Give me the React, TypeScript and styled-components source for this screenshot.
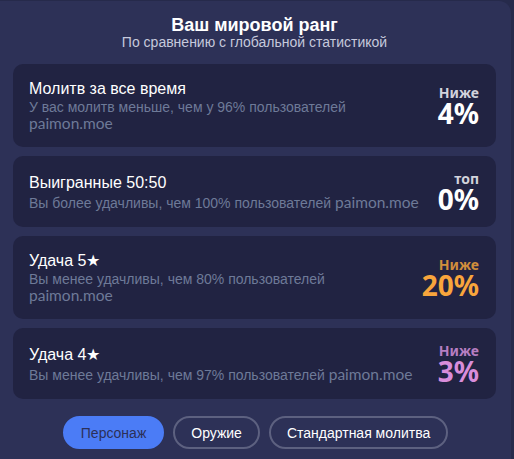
import React from 'react';
import styled, { createGlobalStyle } from 'styled-components';

const GlobalStyle = createGlobalStyle`
    html, body {
        margin: 0;
        padding: 0;
        background: #262a4b;
        overflow: hidden;
    }
    body {
        font-family: "Liberation Sans", Arial, sans-serif;
        -webkit-font-smoothing: antialiased;
    }
`;

type Rank = {
    title: string;
    text: string;
    wrapSite: boolean;
    label: string;
    value: string;
    labelColor: string;
    valueColor: string;
};

const ranks: Rank[] = [
    {
        title: 'Молитв за все время',
        text: 'У вас молитв меньше, чем у 96% пользователей',
        wrapSite: true,
        label: 'Ниже',
        value: '4%',
        labelColor: '#d2d3dc',
        valueColor: '#ffffff',
    },
    {
        title: 'Выигранные 50:50',
        text: 'Вы более удачливы, чем 100% пользователей',
        wrapSite: false,
        label: 'топ',
        value: '0%',
        labelColor: '#d2d3dc',
        valueColor: '#ffffff',
    },
    {
        title: 'Удача 5★',
        text: 'Вы менее удачливы, чем 80% пользователей',
        wrapSite: true,
        label: 'Ниже',
        value: '20%',
        labelColor: '#d08e3c',
        valueColor: '#f8a53c',
    },
    {
        title: 'Удача 4★',
        text: 'Вы менее удачливы, чем 97% пользователей',
        wrapSite: false,
        label: 'Ниже',
        value: '3%',
        labelColor: '#b77ec2',
        valueColor: '#d98ddb',
    },
];

const tabs = ['Персонаж', 'Оружие', 'Стандартная молитва'];

const App = () => {
    return (
        <>
            <GlobalStyle />
            <Panel>
                <Header>
                    <Title>Ваш мировой ранг</Title>
                    <Subtitle>По сравнению с глобальной статистикой</Subtitle>
                </Header>
                <CardList>
                    {ranks.map((r) => (
                        <Card key={r.title}>
                            <Info>
                                <CardTitle>{r.title}</CardTitle>
                                <CardText>
                                    {r.text}
                                    {r.wrapSite ? <br /> : ' '}
                                    <Site>paimon.moe</Site>
                                </CardText>
                            </Info>
                            <Score>
                                <ScoreLabel color={r.labelColor}>{r.label}</ScoreLabel>
                                <ScoreValue color={r.valueColor}>{r.value}</ScoreValue>
                            </Score>
                        </Card>
                    ))}
                </CardList>
                <Tabs>
                    {tabs.map((t, i) => (
                        <TabButton key={t} $active={i === 0}>
                            {t}
                        </TabButton>
                    ))}
                </Tabs>
            </Panel>
        </>
    );
};
export default App;

const Panel = styled.div`
    box-sizing: border-box;
    width: 511px;
    height: 470px;
    margin-top: 1px;
    background: #2d3157;
    border-radius: 0 12px 0 0;
    padding: 14px 15px 0 13px;
    display: flex;
    flex-direction: column;
`;

const Header = styled.div`
    display: flex;
    flex-direction: column;
    align-items: center;
    margin-bottom: 14px;
`;

const Title = styled.div`
    color: #ffffff;
    font-size: 18px;
    font-weight: bold;
    line-height: 20px;
`;

const Subtitle = styled.div`
    color: #c6c9dc;
    font-size: 14px;
    line-height: 15px;
`;

const CardList = styled.div`
    display: flex;
    flex-direction: column;
    gap: 9px;
`;

const Card = styled.div`
    background: #212342;
    border-radius: 10px;
    padding: 15px 17px 15px 16px;
    display: flex;
    align-items: center;
    justify-content: space-between;
`;

const Info = styled.div`
    display: flex;
    flex-direction: column;
`;

const CardTitle = styled.div`
    color: #ffffff;
    font-size: 16px;
    line-height: 20px;
    margin-bottom: 1px;
`;

const CardText = styled.div`
    color: #6e7a98;
    font-size: 14px;
    line-height: 15px;
`;

const Site = styled.span`
    font-family: Lato, "Noto Sans", sans-serif;
    font-size: 15.5px;
    line-height: 16px;
`;

const Score = styled.div`
    display: flex;
    flex-direction: column;
    align-items: flex-end;
    font-family: "Noto Sans", "Open Sans", sans-serif;
    font-weight: 700;
`;

const ScoreLabel = styled.div<{ color: string }>`
    color: ${(p) => p.color};
    font-size: 14px;
    line-height: 15px;
`;

const ScoreValue = styled.div<{ color: string }>`
    color: ${(p) => p.color};
    font-size: 28px;
    line-height: 26px;
`;

const Tabs = styled.div`
    display: flex;
    justify-content: center;
    gap: 9px;
    margin-top: 17px;
    padding-left: 2px;
`;

const TabButton = styled.div<{ $active?: boolean }>`
    box-sizing: border-box;
    height: 33px;
    padding: 0 16px;
    display: flex;
    align-items: center;
    border-radius: 17px;
    font-size: 14px;
    background: ${(p) => (p.$active ? '#4b7cf6' : 'transparent')};
    border: 2px solid ${(p) => (p.$active ? '#4b7cf6' : '#5d6180')};
    color: ${(p) => (p.$active ? '#2c3058' : '#ffffff')};
`;
